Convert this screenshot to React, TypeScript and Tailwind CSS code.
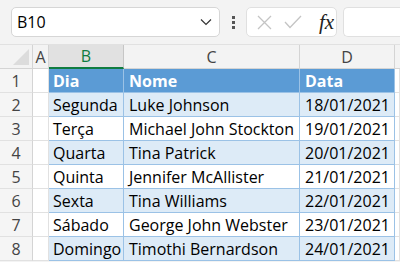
import React from 'react';

const rows = [
  { dia: 'Segunda', nome: 'Luke Johnson', data: '18/01/2021' },
  { dia: 'Terça', nome: 'Michael John Stockton', data: '19/01/2021' },
  { dia: 'Quarta', nome: 'Tina Patrick', data: '20/01/2021' },
  { dia: 'Quinta', nome: 'Jennifer McAllister', data: '21/01/2021' },
  { dia: 'Sexta', nome: 'Tina Williams', data: '22/01/2021' },
  { dia: 'Sábado', nome: 'George John Webster', data: '23/01/2021' },
  { dia: 'Domingo', nome: 'Timothi Bernardson', data: '24/01/2021' },
];

const RowNum = ({ n }: { n: number }) => (
  <div className="h-6 flex items-center justify-center bg-[#f5f5f5] border-r border-b border-r-[#d4d4d4] border-b-[#e1e1e1] text-[#444] text-[16px]">
    {n}
  </div>
);

const GridCell = () => <div className="h-6 bg-white border-r border-b border-[#e1e1e1]" />;

export default function App() {
  return (
    <div className="w-[400px] h-[262px] overflow-hidden bg-[#f3f3f3] font-['Open_Sans',sans-serif] text-black">
      {/* formula bar */}
      <div className="h-[44px] flex items-center pl-[11px]">
        <div className="w-[209px] h-[30px] bg-white border border-[#d6d6d6] rounded-[5px] flex items-center pl-[5px] pr-[7px]">
          <span className="text-[16px] flex-1">B10</span>
          <svg width="12" height="8" viewBox="0 0 12 8" className="text-[#333]">
            <path d="M1 1.5 L6 6.5 L11 1.5" fill="none" stroke="currentColor" strokeWidth="1.2" />
          </svg>
        </div>
        <div className="w-[26px] flex flex-col items-center gap-[2px]">
          <div className="w-[3px] h-[3px] bg-[#555]" />
          <div className="w-[3px] h-[3px] bg-[#555]" />
          <div className="w-[3px] h-[3px] bg-[#555]" />
        </div>
        <div className="w-[91px] h-[30px] bg-white border border-[#e0e0e0] rounded-[5px] flex items-center pl-[10px] gap-[12px]">
          <svg width="15" height="15" viewBox="0 0 15 15">
            <path d="M1 1 L14 14 M14 1 L1 14" stroke="#c4c4c4" strokeWidth="1.3" />
          </svg>
          <svg width="18" height="14" viewBox="0 0 18 14">
            <path d="M1 7 L6 12.5 L17 1" fill="none" stroke="#c4c4c4" strokeWidth="1.3" />
          </svg>
          <span className="ml-[5px] font-['Liberation_Serif',serif] italic text-[21px] text-[#222] leading-none">fx</span>
        </div>
        <div className="ml-[6px] flex-1 h-[30px] bg-white border border-[#e0e0e0] rounded-l-[5px] border-r-0" />
      </div>

      {/* sheet */}
      <div className="grid grid-cols-[33px_16px_75px_176px_95px_1fr] border-t border-[#e1e1e1]">
        {/* column headers */}
        <div className="h-6 relative bg-[#f3f3f3] border-r border-b border-[#d4d4d4]">
          <div className="absolute right-[3px] bottom-[3px] w-0 h-0 border-l-[16px] border-l-transparent border-b-[16px] border-b-[#dcdcdc]" />
        </div>
        <div className="h-6 flex items-center justify-center bg-[#f3f3f3] border-r border-b border-[#d4d4d4] text-[#444] text-[16px]">A</div>
        <div className="h-6 flex items-center justify-center bg-[#e1e1e1] border-r border-[#c6c6c6] border-b-2 border-b-[#107c41] text-[#107c41] text-[16px]">B</div>
        <div className="h-6 flex items-center justify-center bg-[#f3f3f3] border-r border-b border-[#d4d4d4] text-[#444] text-[16px]">C</div>
        <div className="h-6 flex items-center justify-center bg-[#f3f3f3] border-r border-b border-[#d4d4d4] text-[#444] text-[16px]">D</div>
        <div className="h-6 bg-[#f3f3f3] border-b border-[#d4d4d4]" />

        {/* table header */}
        <RowNum n={1} />
        <GridCell />
        <div className="h-6 flex items-center pl-1 bg-[#5b9bd5] border-r border-b border-[#9bc2e6] text-white font-bold text-[16px]">Dia</div>
        <div className="h-6 flex items-center pl-[5px] bg-[#5b9bd5] border-r border-b border-[#9bc2e6] text-white font-bold text-[16px]">Nome</div>
        <div className="h-6 flex items-center pl-[5px] bg-[#5b9bd5] border-r border-b border-[#9bc2e6] text-white font-bold text-[16px]">Data</div>
        <GridCell />

        {rows.map((r, i) => {
          const bg = i % 2 === 0 ? 'bg-[#ddebf7]' : 'bg-white';
          return (
            <React.Fragment key={r.dia}>
              <RowNum n={i + 2} />
              <GridCell />
              <div className={`h-6 flex items-center pl-1 ${bg} border-r border-b border-[#9bc2e6] text-[16px] whitespace-nowrap`}>{r.dia}</div>
              <div className={`h-6 flex items-center pl-[5px] ${bg} border-r border-b border-[#9bc2e6] text-[16px] whitespace-nowrap`}>{r.nome}</div>
              <div className={`h-6 flex items-center pl-[5px] ${bg} border-r border-b border-[#9bc2e6] text-[16px] whitespace-nowrap`}>{r.data}</div>
              <GridCell />
            </React.Fragment>
          );
        })}
      </div>
    </div>
  );
}
